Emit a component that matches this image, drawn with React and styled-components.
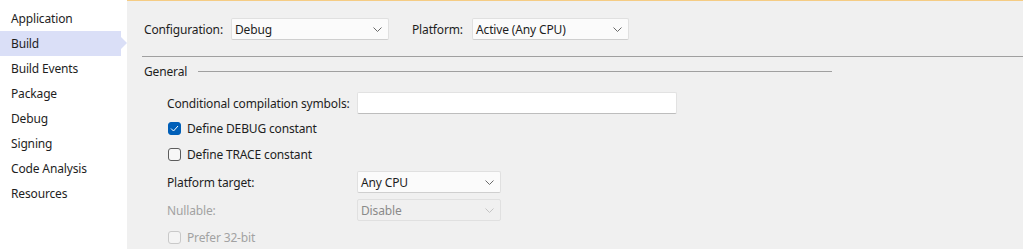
import * as React from 'react';
import styled, { createGlobalStyle } from 'styled-components';

const font = '"Noto Sans", "Open Sans", sans-serif';

const GlobalStyle = createGlobalStyle`
  html, body { margin: 0; padding: 0; }
  body {
    font-family: ${font};
    font-size: 12px;
    letter-spacing: -0.15px;
    color: #1e1e1e;
    background: #f0f0f0;
  }
`;

const Page = styled.div`
  display: flex;
  width: 1023px;
  height: 249px;
  overflow: hidden;
`;

const Sidebar = styled.nav`
  width: 127px;
  flex: none;
  background: #ffffff;
  padding-top: 6px;
  display: flex;
  flex-direction: column;
`;

const NavItem = styled.div`
  position: relative;
  height: 25px;
  line-height: 25px;
  padding-left: 11px;
  width: 121px;
  box-sizing: border-box;
  background: ${p => (p.$active ? '#dadff7' : 'transparent')};

  ${p => p.$active && `
    &::after {
      content: '';
      position: absolute;
      right: -6px;
      top: 6px;
      border-left: 6px solid #dadff7;
      border-top: 6.5px solid transparent;
      border-bottom: 6.5px solid transparent;
    }
  `}
`;

const Content = styled.main`
  flex: 1;
  border-top: 1px solid #f5cc84;
  padding: 17px 0 0 15px;
  display: flex;
  flex-direction: column;
`;

const TopRow = styled.div`
  display: flex;
  align-items: center;
  padding-left: 2px;
  height: 22px;
`;

const Label = styled.span`
  color: ${p => (p.$disabled ? '#a2a2a2' : '#1e1e1e')};
  white-space: nowrap;
`;

const TopLabel = styled(Label)`
  width: ${p => p.$width}px;
  margin-left: ${p => p.$ml || 0}px;
  flex: none;
`;

const Select = styled.div`
  box-sizing: border-box;
  width: ${p => p.$width}px;
  height: ${p => p.$height || 22}px;
  display: flex;
  align-items: center;
  justify-content: space-between;
  padding: 0 6px 0 3px;
  background: ${p => (p.$disabled ? '#f0f0f0' : '#fbfbfb')};
  border: 1px solid #e0e0e0;
  border-bottom-color: ${p => (p.$disabled ? '#e0e0e0' : '#cfcfcf')};
  border-radius: 2px;
  color: ${p => (p.$disabled ? '#8a8a8a' : '#1e1e1e')};
`;

const Chevron = ({ disabled }) => (
  <svg width="9" height="5" viewBox="0 0 9 5">
    <path d="M0.5 0.5 L4.5 4.5 L8.5 0.5" fill="none" stroke={disabled ? '#c4c4c4' : '#6a6a6a'} strokeWidth="1" />
  </svg>
);

const Divider = styled.div`
  height: 1px;
  background: #a0a0a0;
  margin-top: 16px;
`;

const Group = styled.section`
  width: 690px;
  margin-top: 6px;
`;

const Legend = styled.div`
  display: flex;
  align-items: center;
  height: 17px;
  padding-left: 2px;
  gap: 11px;

  &::after {
    content: '';
    flex: 1;
    height: 1px;
    background: #a0a0a0;
  }
`;

const Form = styled.div`
  display: flex;
  flex-direction: column;
  padding-left: 25px;
`;

const Row = styled.div`
  display: flex;
  align-items: center;
  height: 22px;
  margin-top: ${p => p.$mt}px;
`;

const FieldLabel = styled(Label)`
  width: 190px;
  flex: none;
`;

const TextBox = styled.div`
  box-sizing: border-box;
  width: 320px;
  height: 22px;
  background: #ffffff;
  border: 1px solid #e2e2e2;
  border-bottom-color: #bdbdbd;
  border-radius: 2px;
`;

const CheckLabel = styled.label`
  display: flex;
  align-items: center;
  gap: 6px;
  padding-left: 1px;
  color: ${p => (p.$disabled ? '#a2a2a2' : '#1e1e1e')};
`;

const Box = styled.span`
  box-sizing: border-box;
  width: 13px;
  height: 13px;
  border-radius: 3px;
  display: flex;
  align-items: center;
  justify-content: center;
  background: ${p => (p.$checked ? '#005fb8' : p.$disabled ? '#f4f4f4' : '#f7f7f7')};
  border: 1px solid ${p => (p.$checked ? '#005fb8' : p.$disabled ? '#c9c9c9' : '#5c5c5c')};
`;

const CheckBox = ({ checked, disabled, children }) => (
  <CheckLabel $disabled={disabled}>
    <Box $checked={checked} $disabled={disabled}>
      {checked && (
        <svg width="9" height="7" viewBox="0 0 9 7">
          <path d="M1 3.5 L3.5 6 L8 1" fill="none" stroke="#ffffff" strokeWidth="1" />
        </svg>
      )}
    </Box>
    {children}
  </CheckLabel>
);

const navItems = ['Application', 'Build', 'Build Events', 'Package', 'Debug', 'Signing', 'Code Analysis', 'Resources'];

export default function App() {
  return (
    <Page>
      <GlobalStyle />
      <Sidebar>
        {navItems.map(item => (
          <NavItem key={item} $active={item === 'Build'}>{item}</NavItem>
        ))}
      </Sidebar>
      <Content>
        <TopRow>
          <TopLabel $width={87}>Configuration:</TopLabel>
          <Select $width={158}>Debug<Chevron /></Select>
          <TopLabel $width={60} $ml={23}>Platform:</TopLabel>
          <Select $width={157}>Active (Any CPU)<Chevron /></Select>
        </TopRow>
        <Divider />
        <Group>
          <Legend>General</Legend>
          <Form>
            <Row $mt={12}>
              <FieldLabel>Conditional compilation symbols:</FieldLabel>
              <TextBox />
            </Row>
            <Row $mt={3}>
              <CheckBox checked>Define DEBUG constant</CheckBox>
            </Row>
            <Row $mt={4}>
              <CheckBox>Define TRACE constant</CheckBox>
            </Row>
            <Row $mt={6}>
              <FieldLabel>Platform target:</FieldLabel>
              <Select $width={144}>Any CPU<Chevron /></Select>
            </Row>
            <Row $mt={6}>
              <FieldLabel $disabled>Nullable:</FieldLabel>
              <Select $width={144} $disabled>Disable<Chevron disabled /></Select>
            </Row>
            <Row $mt={5}>
              <CheckBox disabled>Prefer 32-bit</CheckBox>
            </Row>
          </Form>
        </Group>
      </Content>
    </Page>
  );
}
